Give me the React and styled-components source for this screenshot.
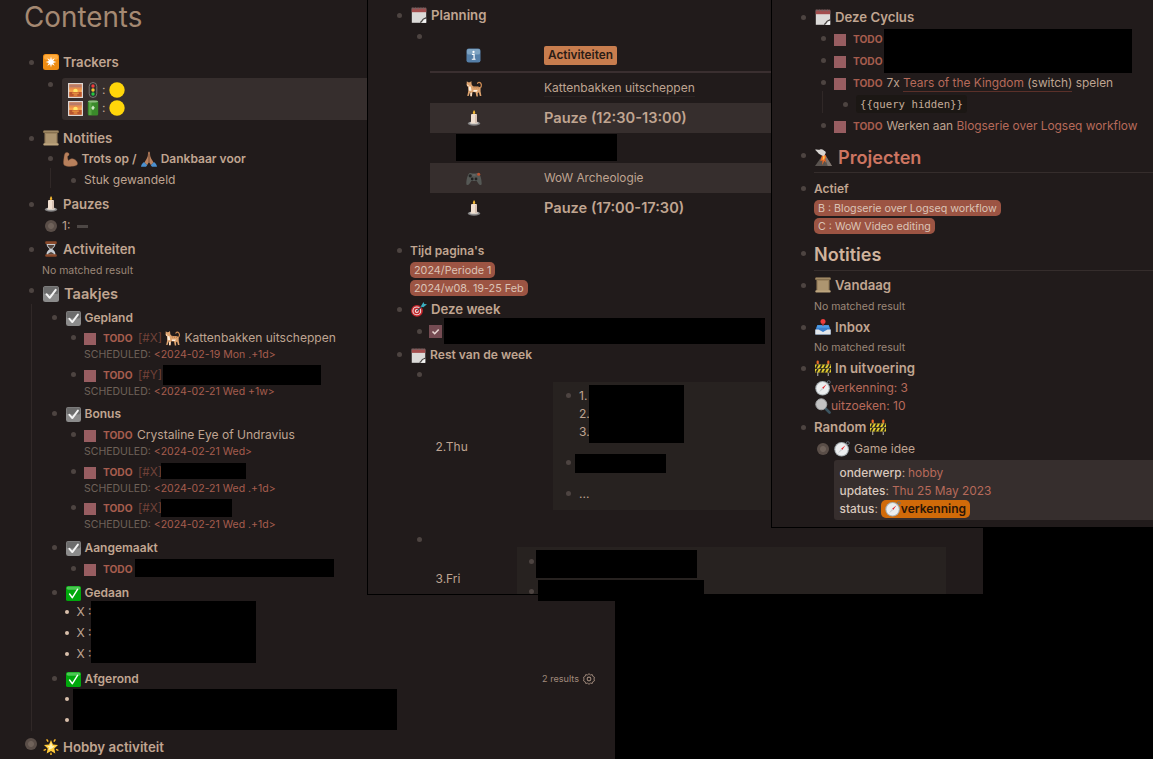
import React from 'react';
import styled, { createGlobalStyle, css } from 'styled-components';

const c = {
  panel: '#211b1b',
  block: '#362e2d',
  card: '#272220',
  text: '#bfa491',
  heading: '#c0a591',
  dim: '#6f6259',
  accent: '#a65d4e',
  link: '#b66a5a',
  bullet: '#4d4441',
  line: '#302827',
};

const GlobalStyle = createGlobalStyle`
  * { box-sizing: border-box; }
  html, body { margin: 0; background: #000; }
  body { font-family: Inter, "Liberation Sans", sans-serif; overflow: hidden; }
`;

const Desktop = styled.main`
  position: relative;
  width: 1153px;
  height: 759px;
  overflow: hidden;
  background: #000;
  color: ${c.text};
  font-size: 12px;
  line-height: 16px;
  white-space: nowrap;
`;

const Panel = styled.section`
  position: absolute;
  top: 0;
  left: ${p => p.$left}px;
  width: ${p => p.$w}px;
  height: ${p => p.$h}px;
  background: ${c.panel};
  ${p => p.$framed && css`border: solid #000; border-width: 0 0 1px 1px;`}
`;

const Row = styled.div`
  position: relative;
  display: flex;
  align-items: center;
  height: ${p => p.$h || 16}px;
  margin-top: ${p => p.$gap || 0}px;
  padding-left: ${p => p.$x || 0}px;
`;

const Slot = styled.span`
  flex: 0 0 ${p => p.$w}px;
  display: flex;
  padding-bottom: ${p => p.$up || 0}px;
`;
const Dot = styled.i`
  width: 5px;
  height: 5px;
  border-radius: 50%;
  background: ${c.bullet};
`;
const Bullet = ({ w = 14, up = 0 }) => <Slot $w={w} $up={up}><Dot /></Slot>;

const Collapsed = styled.span`
  flex: 0 0 12px;
  height: 12px;
  margin-right: ${p => p.$mr}px;
  margin-bottom: ${p => p.$up || 0}px;
  border-radius: 50%;
  background: radial-gradient(circle, #6f625a 0 2.5px, #5a4e48 3.4px);
`;

const ListDot = styled.i`
  flex: 0 0 4px;
  height: 4px;
  margin-right: ${p => p.$mr || 0}px;
  border-radius: 50%;
  background: #d8bfab;
`;

const Dash = styled.i`
  width: 11px;
  height: 3px;
  margin-left: 7px;
  background: #4d4745;
`;

const Title = styled.h1`
  margin: 0;
  height: 35px;
  padding-left: 24px;
  font-size: 27.8px;
  font-weight: 400;
  line-height: 35px;
  color: #a58972;
`;

const H = styled.span`
  font-size: ${p => p.$s || 13.2}px;
  font-weight: 600;
  color: ${p => p.$color || c.heading};
  margin-left: ${p => p.$ml || 0}px;
`;

const Text = styled.span`
  font-size: ${p => p.$s || 12.05}px;
  font-weight: ${p => p.$wt || 400};
  color: ${p => p.$color || c.text};
  margin-left: ${p => p.$ml || 0}px;
`;

const Small = styled(Text)`
  font-size: 10.5px;
  color: ${p => p.$color || '#9d8879'};
`;

const Branch = styled.div`
  display: flow-root;
  margin-left: ${p => p.$x}px;
  border-left: 1px solid ${c.line};
  height: ${p => p.$h}px;
  margin-top: ${p => p.$gap || 0}px;
`;

const Box = styled.i`
  flex: 0 0 12px;
  height: 12px;
  margin-top: 2px;
  background: #985d61;
`;

const TodoMark = styled.b`
  flex: 0 0 29px;
  min-width: 0;
  margin-left: 7px;
  font-size: 10.2px;
  font-weight: 700;
  color: ${c.accent};
`;

const Priority = styled.span`
  flex: 0 0 23px;
  min-width: 0;
  margin-left: 6px;
  font-size: 11.8px;
  color: #6f4138;
`;

const Redacted = styled.span`
  position: absolute;
  z-index: 1;
  left: ${p => p.$x}px;
  top: ${p => p.$y}px;
  width: ${p => p.$w}px;
  height: ${p => p.$h}px;
  background: #000;
`;

const Props = styled.div`
  margin: ${p => p.$m};
  width: ${p => p.$w}px;
  padding: ${p => p.$pad || '3px 6px'};
  border-radius: 3px 0 0 3px;
  background: ${c.block};
`;
const PropLine = styled.div`
  display: flex;
  align-items: center;
  height: 18px;
`;

const Results = styled.span`
  display: flex;
  align-items: center;
  gap: 4px;
  margin-left: auto;
  padding-right: 20px;
  font-size: 9.1px;
  color: #a08a7b;
`;

const Tag = styled.span`
  display: flex;
  align-items: center;
  height: 19px;
  padding: 0 4px;
  border-radius: 2px;
  background: #c87d4e;
  color: #2a1c16;
  font-weight: 600;
  font-size: 11.8px;
`;

const Pill = styled.span`
  display: flex;
  align-items: center;
  height: 16px;
  padding: 1px 4px 0;
  border-radius: 5px;
  background: #9c5443;
  color: #dbc3b6;
  font-size: ${p => p.$s || 10.8}px;
`;

const TableRow = styled.div`
  display: grid;
  grid-template-columns: 90px 1fr;
  align-items: center;
  margin-left: 62px;
  width: 516px;
  height: 30px;
  background: ${p => (p.$striped ? c.block : 'none')};
  ${p => p.$head && css`
    height: 29px;
    padding-bottom: 5px;
    border-bottom: 2px solid #3a2f30;
  `}
`;
const Cell = styled.div`
  display: flex;
  padding-left: ${p => (p.$icon ? 36 : 24)}px;
`;

const DayCard = styled.div`
  display: flow-root;
  margin-left: ${p => p.$x}px;
  width: ${p => p.$w}px;
  height: ${p => p.$h}px;
  background: ${c.card};
`;
const Day = styled.div`
  position: relative;
`;
const DayName = styled.span`
  position: absolute;
  left: 67.500px;
  top: ${p => p.$y}px;
`;

const Rule = styled.hr`
  margin: ${p => p.$gap}px 0 0 42px;
  height: 1px;
  border: 0;
  background: #352d2c;
`;

const Code = styled.code`
  display: flex;
  align-items: center;
  height: 18px;
  padding: 0 4px;
  border-radius: 3px;
  background: #1b1714;
  color: #c3ab98;
  font: 10.7px "DejaVu Sans Mono", monospace;
`;

const Underlined = styled.span`
  padding-bottom: 1px;
  border-bottom: 1px solid #5a3029;
`;
const CellLink = styled.span`
  padding-top: 1px;
  border-bottom: 1px solid #2b2423;
`;
const Status = styled.span`
  display: flex;
  align-items: center;
  height: 18px;
  margin-left: 3px;
  padding: 0 4px;
  border-radius: 5px;
  background: #d06a09;
  color: #2b1507;
  font-weight: 600;
`;
const Key = styled.span`
  color: #d9c8bd;
  font-size: 11.9px;
  font-weight: 500;
`;

const Svg = styled.svg`
  flex: none;
  display: block;
  width: ${p => p.$s}px;
  height: ${p => p.$s}px;
  margin-left: ${p => p.$ml || 0}px;
`;

const glyphs = {
  spark: (
    <>
      <rect width="16" height="16" rx="2.500" fill="#ee8c12" />
      <rect x="1" y=".8" width="14" height="5" rx="2" fill="#ffab3d" />
      <path d="M8 2.600l.9 3.100 2.800-1.500-1.500 2.900 3.200.9-3.200.9 1.500 2.900-2.800-1.500L8 13.400l-.9-3.100-2.800 1.500 1.500-2.900L2.600 8l3.200-.9-1.500-2.900 2.800 1.500z" fill="#fff" />
    </>
  ),
  sunrise: (
    <>
      <rect width="16" height="16" fill="#dcd6d4" />
      <rect x="1.400" y="1.400" width="13.200" height="13.200" fill="#f5a04a" />
      <rect x="1.400" y="1.400" width="13.200" height="3.600" fill="#b97a68" />
      <rect x="1.400" y="5" width="13.200" height="2" fill="#e88d4c" />
      <circle cx="8" cy="8.500" r="2.400" fill="#ffe66a" />
      <rect x="1.400" y="9.600" width="13.200" height="5" fill="#b8552f" />
      <path d="M4.500 10.800h7M6 12.800h4" stroke="#ffb04a" />
    </>
  ),
  traffic: (
    <>
      <rect x="4.200" y=".5" width="7.600" height="15" rx="3.800" fill="#2c2f2f" stroke="#8a8682" strokeWidth=".8" />
      <circle cx="8" cy="4" r="1.700" fill="#ef3b3b" />
      <circle cx="8" cy="8" r="1.700" fill="#f4c430" />
      <circle cx="8" cy="12" r="1.700" fill="#25c63f" />
    </>
  ),
  battery: (
    <>
      <rect x="2.800" y=".5" width="10.400" height="15" rx="1.500" fill="#3a8a2a" />
      <rect x="4" y="1.500" width="2.500" height="13.500" fill="#56a542" />
      <ellipse cx="8" cy="1.500" rx="5" ry="1.100" fill="#8fbb80" />
      <path d="M8 5.500l1.800 2.300L8 10.300 6.200 8z" fill="#cfe9c5" />
    </>
  ),
  yellow: <circle cx="8" cy="8" r="7.700" fill="#ffd60a" />,
  scroll: (
    <>
      <path d="M1.500 2h13v12h-13z" fill="#9c8460" />
      <path d="M3 4h10v9H3z" fill="#ad9570" />
      <rect x="0" y=".5" width="16" height="2.600" rx="1" fill="#86704f" />
      <rect x=".3" y="13.200" width="15.400" height="2.300" rx="1" fill="#bda57e" />
      <path d="M1 1.200h14" stroke="#bda57e" strokeWidth=".7" />
    </>
  ),
  muscle: (
    <path d="M2.800.8C4.300.2 6.300.9 6.500 2c.2 1.300-.8 2-1.600 2.500-.2 1.700.2 3.300 1 4.700 1.300-1.700 3.300-2.400 5.300-1.800 2.600.8 4.300 3 4.300 5.200 0 1.800-2.500 2.500-5.500 2.700-3.500.2-7 0-8.700-1.300C.1 12.800.5 9.800 1 6.500 1.300 4.300 1.500 1.800 2.800.8z" fill="#b8805c" stroke="#8d5c40" strokeWidth=".4" />
  ),
  pray: (
    <>
      <path d="M8 .6c1 .5 1 2.300 1.200 4.100.2 1.600 1 2.600 1.900 4.300l1.500 2.500-2.600 2.800L8 11l-2 3.300-2.600-2.800L4.900 9c.9-1.700 1.700-2.700 1.900-4.300C7 2.900 7 1.100 8 .6z" fill="#b98260" />
      <path d="M8 2.500V11" stroke="#70452f" strokeWidth=".9" />
      <path d="M3 11l3.200 3.200L5 15.800H0c.2-2 1.500-3.600 3-4.800zM13 11l-3.200 3.200L11 15.800h5c-.2-2-1.500-3.600-3-4.800z" fill="#4a90cf" />
    </>
  ),
  candle: (
    <>
      <ellipse cx="8" cy="13.500" rx="6.300" ry="2.200" fill="#807f80" />
      <ellipse cx="8" cy="13" rx="4.600" ry="1.300" fill="#c3c0bd" />
      <rect x="5" y="4" width="6" height="9.500" rx="1" fill="#f0dfd0" />
      <rect x="9" y="5" width="2" height="8" fill="#d8c2b4" />
      <path d="M8 0c1.200 1.700 1.300 2.300 1.200 3.200C9.100 4.300 6.900 4.300 6.800 3.200 6.800 2.400 7.300 1.500 8 0z" fill="#f2b632" />
    </>
  ),
  hourglass: (
    <>
      <path d="M3.500 2h9c0 3.500-1.500 4.500-3.300 6 1.800 1.500 3.300 2.500 3.300 6h-9c0-3.500 1.500-4.500 3.300-6C5 6.500 3.500 5.500 3.500 2z" fill="#c7ccd2" />
      <path d="M4.500 4h7C10.500 6.500 9 7 8 8 7 7 5.500 6.500 4.500 4zM4.800 13.500c.7-1.500 1.700-2 3.200-2.500 1.500.5 2.500 1 3.200 2.500z" fill="#54453d" />
      <rect x="2.200" y=".3" width="11.600" height="2.600" rx="1" fill="#8a4a2b" />
      <rect x="2.200" y="13.200" width="11.600" height="2.600" rx="1" fill="#8a4a2b" />
    </>
  ),
  checkGrey: (
    <>
      <rect width="16" height="16" rx="2.500" fill="#8b8b8b" />
      <rect x=".6" y=".6" width="14.800" height="7.500" rx="2.200" fill="#6c6c6c" />
      <path d="M3.500 8.200l3.200 3.600 6-8" fill="none" stroke="#f4f4f4" strokeWidth="2" strokeLinecap="round" strokeLinejoin="round" />
    </>
  ),
  checkGreen: (
    <>
      <rect width="16" height="16" rx="2" fill="#00a80c" />
      <rect x=".6" y=".5" width="14.800" height="3.500" rx="1.800" fill="#4bc753" />
      <path d="M3.800 8.500l3 4L12.300 3.500" fill="none" stroke="#fff" strokeWidth="1.500" strokeLinecap="round" strokeLinejoin="round" />
    </>
  ),
  cat: (
    <>
      <path d="M12.500 8c2-1 2.700-3.500 1.200-5.200-.8-.9-2.400-.8-2.800.3" fill="none" stroke="#c98952" strokeWidth="1.200" strokeLinecap="round" />
      <path d="M.8 1.200l1.200 1L3.800 2 5 1l.3 3.200 1.200 1.600c2 .5 4-.1 6.200.7 1.200.8 1.100 2.500 1 4l.8 4.500h-1.500L12 11.500l-1 1 .2 3H9.800L9 11.500l-2.800-.3-.7 4.300H4.200L4 11 2.500 15H1.200l1-5L2 6.500.5 4.800z" fill="#dda36f" />
      <path d="M2.500 6l2 .2.700 3.800-2.500.2zM1 4l1.800 1.500L1.500 6zM7 9.500h4l-1 1.500H7zM4.200 12h1.200v3H4.200z" fill="#fff0df" />
      <path d="M7 5.800l.8 2M9 6l.7 2M11 6l.6 2" stroke="#a96838" strokeWidth=".6" />
    </>
  ),
  star: (
    <>
      <path d="M8 1l2 4.600 5 .5-3.700 3.400 1 5L8 12l-4.300 2.500 1-5L1 6.100l5-.5z" fill="#ffcb3a" />
      <path d="M8 3.200l1.200 3.500 2.500.4-2 2-1.700 1-2.500.8.800-2.400L4 7.100l2.800-.4z" fill="#fff3b5" />
      <path d="M4 .8l.8 1.400M12 .8l-.8 1.400M1.200 11.200l1.200-.6M14.800 11.200l-1.200-.6M8 14.200v1.400" stroke="#f6b526" strokeWidth="1.500" strokeLinecap="round" />
    </>
  ),
  notepad: (
    <>
      <path d="M.8 1.500h14.400V15.800H.8z" fill="#dcdad8" />
      <rect x=".8" y=".8" width="14.400" height="4.400" fill="#a34d4d" />
      <path d="M.8 1.300h14.400" stroke="#6c6666" strokeWidth="1.800" strokeDasharray="1 .6" />
      <path d="M15.200 11.500L10.500 15.800h4.700z" fill="#f6f6f6" />
      <path d="M15.200 10.800c-1.500 1-3 .8-3.500 2-.4 1-1.200 2-2.500 2.600" fill="none" stroke="#423e3c" strokeWidth="1.100" />
    </>
  ),
  info: (
    <>
      <rect x=".5" y=".5" width="15" height="15" rx="2.500" fill="#557fa8" />
      <rect x="1" y="1" width="14" height="6" rx="2" fill="#7ea3c2" />
      <circle cx="8" cy="4.200" r="1.200" fill="#fff" />
      <path d="M6.300 6.900h2.300v4.600M6.200 12h4" stroke="#fff" strokeWidth="1.300" fill="none" />
    </>
  ),
  gamepad: (
    <>
      <path d="M3 3.500c1.500-1 2.500-.4 3.500 0h3c1-.4 2-1 3.500 0 1.500 1.500 2.700 6.500 2.700 10 0 2-2 2-3.200.3L10.700 11H5.300l-1.800 2.800C2.300 15.500.3 15.500.3 13.500.3 10 1.500 5 3 3.500z" fill="#555855" />
      <circle cx="4.200" cy="5.800" r="1.600" fill="#252726" />
      <circle cx="6.200" cy="9" r="1.400" fill="#222" />
      <circle cx="10" cy="9" r="1.400" fill="#222" />
      <circle cx="12.700" cy="4.300" r="1.500" fill="#bf512f" />
      <path d="M6.500 5h3" stroke="#777" strokeWidth=".8" />
    </>
  ),
  target: (
    <>
      <circle cx="6" cy="9.800" r="5.900" fill="#c7262c" />
      <circle cx="5.800" cy="9.900" r="4.400" fill="#ece6e4" />
      <circle cx="5.800" cy="9.900" r="3.400" fill="#c7262c" />
      <circle cx="5.800" cy="9.900" r="2" fill="#ece6e4" />
      <circle cx="5.800" cy="9.900" r=".9" fill="#c7262c" />
      <path d="M6 9.800L12 4.500" stroke="#24505d" strokeWidth="1.100" />
      <path d="M9.800 5.500L12.500 1l.8 2 2.700.2-3.700 3z" fill="#3bb0c2" />
    </>
  ),
  volcano: (
    <>
      <path d="M0 16L7 6h3l6 10z" fill="#59534f" />
      <path d="M8.500 6H10l6 10h-4z" fill="#817770" />
      <path d="M6.300 7C8 4 10 4.500 10.500 8l-1 1 1 4-1.700-2-2 4 .3-4.500L5 11.500z" fill="#ef6a25" />
      <path d="M7.600 6.500l1.800.5-.7 2.500-1.500 1z" fill="#ffc14a" />
      <path d="M0 .8C2 0 3.300 1 4.300.7 6.500-.2 8 .8 8.500 1.700c1.700.3 2 2 1.200 2.800L8.500 6.500l-2-.3C5.500 5 4 5 3.300 4.200 2.500 3 1.500 2.200 0 .8z" fill="#d8d5d2" />
    </>
  ),
  outbox: (
    <>
      <path d="M2.300 6h11.400l1.800 5v4.500H.5V11z" fill="#3b7fcc" />
      <path d="M.3 10.500h3.200L8 13l4.500-2.500h3.200v5.100H.3z" fill="#e4e7ea" />
      <path d="M2.500 6.200h11l1 2.500h-13z" fill="#4d9be4" />
      <circle cx="8" cy="2.600" r="2.500" fill="#ee3e3c" />
      <path d="M7 4.500h2L8.500 7h-1z" fill="#b8393e" />
    </>
  ),
  barrier: (
    <>
      <path d="M2.700 3v13M13.300 3v13" stroke="#97928e" strokeWidth="1.300" />
      <rect x="0" y="4.500" width="16" height="3.700" fill="#e6cf2f" />
      <rect x="0" y="9" width="16" height="3.500" fill="#e6cf2f" />
      <path d="M1 8.200l2-3.700M5 8.200l2-3.700M9 8.200l2-3.700M13 8.200l2-3.700M1 12.500L3 9M5 12.500L7 9M9 12.500l2-3.500M13 12.500L15 9" stroke="#2b281f" strokeWidth="1.600" />
      <path d="M1.600 3.800V1.500a1.100 1.100 0 012.200 0v2.300zM12.200 3.800V1.500a1.100 1.100 0 012.200 0v2.300z" fill="#ee6a24" />
    </>
  ),
  compass: (
    <>
      <circle cx="13.800" cy="2.200" r="1.500" fill="none" stroke="#66707a" strokeWidth=".9" />
      <circle cx="7.600" cy="8.300" r="7.300" fill="#a9b0b4" />
      <circle cx="7.600" cy="8.300" r="6.200" fill="#eceeef" />
      <path d="M11.500 4.200L8.200 8.900 7.100 7.800z" fill="#e5242c" />
      <path d="M3.800 12.400l3.300-4.600 1.100 1.100z" fill="#c8ccd1" />
    </>
  ),
  magnifier: (
    <>
      <path d="M10.500 10.500l4 4" stroke="#3c5561" strokeWidth="2.600" strokeLinecap="round" />
      <circle cx="6.300" cy="6.300" r="5.500" fill="#c3c3c3" stroke="#a2a4a5" strokeWidth="1" />
    </>
  ),
  gear: (
    <g fill="none" stroke="#a08a7b">
      <path d="M8 .9l1.900 1.700 2.500-.4.8 2.400 2.200 1.200-.8 2.200.8 2.300-2.200 1.200-.8 2.400-2.500-.4L8 15.100l-1.900-1.600-2.500.4-.8-2.400L.6 10.300 1.400 8 .6 5.800l2.200-1.200.8-2.400 2.500.4z" strokeWidth="1.300" strokeLinejoin="round" />
      <circle cx="8" cy="8" r="2.500" strokeWidth="1.400" />
    </g>
  ),
};

const Icon = ({ name, s = 16, ml }) => (
  <Svg $s={s} $ml={ml} viewBox="0 0 16 16" aria-hidden="true">{glyphs[name]}</Svg>
);

const Checked = () => (
  <Svg $s={13} viewBox="0 0 13 13">
    <rect width="13" height="13" fill="#754b52" />
    <path d="M3.500 6.500l2.200 2.200 4-4.200" fill="none" stroke="#e8d6d2" strokeWidth="1.600" />
  </Svg>
);

const Section = ({ x = 29, w = 14, up, gap, icon, s, is, ml = 4, children, after }) => (
  <Row $x={x} $gap={gap}>
    <Bullet w={w} up={up} />
    {icon && <Icon name={icon} s={is} />}
    <H $s={s} $ml={icon ? ml : 0}>{children}</H>
    {after}
  </Row>
);

const SubSection = props => <Section x={19.5} is={15} s={12} up={2} {...props} />;

const Todo = ({ x = 39, gap, pri, children }) => (
  <Row $x={x} $gap={gap}>
    <Bullet w={13} up={1} />
    <Box />
    <TodoMark>TODO</TodoMark>
    {pri && <Priority>[#{pri}]</Priority>}
    {children}
  </Row>
);

const Scheduled = ({ date }) => (
  <Row $x={52} $gap={1}>
    <Small $color={c.dim}>SCHEDULED:</Small>
    <Small $color={c.accent} $ml={3}>&lt;{date}&gt;</Small>
  </Row>
);

const Contents = () => (
  <Panel $left={0} $w={615} $h={759}>
    <Title>Contents</Title>
    <Section gap={19} icon="spark">Trackers</Section>
    <Row $x={48} $h={42} $gap={8}>
      <Bullet w={14} up={29} />
      <Props $m="0" $w={553}>
        <PropLine><Icon name="sunrise" s={15} /><Icon name="traffic" ml={2} /><Text $ml={1}>:</Text><Icon name="yellow" ml={4} /></PropLine>
        <PropLine><Icon name="sunrise" s={15} /><Icon name="battery" ml={2} /><Text $ml={1}>:</Text><Icon name="yellow" ml={4} /></PropLine>
      </Props>
    </Row>
    <Section gap={10} icon="scroll">Notities</Section>
    <Row $x={48} $gap={5}>
      <Bullet w={15} up={1} />
      <Icon name="muscle" s={15} />
      <H $s={12} $ml={3.5}>Trots op /</H>
      <Icon name="pray" ml={4} />
      <H $s={12} $ml={4}>Dankbaar voor</H>
    </Row>
    <Branch $x={50} $h={20} $gap={1}>
      <Row $x={20} $gap={4}><Bullet w={13} /><Text>Stuk gewandeld</Text></Row>
    </Branch>
    <Section gap={8} icon="candle">Pauzes</Section>
    <Row $x={45} $gap={6}>
      <Collapsed $mr={5} /><Text>1:</Text><Dash />
    </Row>
    <Section gap={7} icon="hourglass">Activiteiten</Section>
    <Row $x={42} $gap={6}><Small>No matched result</Small></Row>
    <Section gap={7} icon="checkGrey" s={14.6} up={7} ml={5}>Taakjes</Section>
    <Branch $x={31} $h={427} $gap={2}>
      <SubSection gap={6} icon="checkGrey">Gepland</SubSection>
      <Todo gap={4} pri="X"><Icon name="cat" ml={4} /><Text $ml={3.5}>Kattenbakken uitscheppen</Text></Todo>
      <Scheduled date="2024-02-19 Mon .+1d" />
      <Todo gap={4} pri="Y"><Redacted $x={131} $y={-2} $w={158} $h={20} /></Todo>
      <Scheduled date="2024-02-21 Wed +1w" />
      <SubSection gap={6} icon="checkGrey">Bonus</SubSection>
      <Todo gap={5}><Text $ml={5}>Crystaline Eye of Undravius</Text></Todo>
      <Scheduled date="2024-02-21 Wed" />
      <Todo gap={4} pri="X"><Redacted $x={129} $y={-1} $w={85} $h={16} /></Todo>
      <Scheduled date="2024-02-21 Wed .+1d" />
      <Todo gap={3} pri="X"><Redacted $x={129} $y={-1} $w={71} $h={18} /></Todo>
      <Scheduled date="2024-02-21 Wed .+1d" />
      <SubSection gap={7} icon="checkGrey">Aangemaakt</SubSection>
      <Todo gap={5}><Redacted $x={103} $y={-2} $w={199} $h={18} /></Todo>
      <SubSection gap={8} icon="checkGreen">Gedaan</SubSection>
      <Row $x={32.5} $gap={3}><ListDot $mr={8} /><Text>X :</Text><Redacted $x={59} $y={-3} $w={165} $h={62} /></Row>
      <Row $x={32.5} $gap={5}><ListDot $mr={8} /><Text>X :</Text></Row>
      <Row $x={32.5} $gap={5}><ListDot $mr={8} /><Text>X :</Text></Row>
      <SubSection gap={9} icon="checkGreen" after={<Results>2 results<Icon name="gear" s={12} /></Results>}>
        Afgerond
      </SubSection>
      <Row $x={32.5} $gap={4}><ListDot /><Redacted $x={41} $y={-2} $w={324} $h={41} /></Row>
      <Row $x={32.5} $gap={5}><ListDot /></Row>
    </Branch>
    <Row $x={25} $gap={8}>
      <Collapsed $mr={6} $up={6} />
      <Icon name="star" />
      <H $ml={4} $s={13.3}>Hobby activiteit</H>
    </Row>
  </Panel>
);

const Planning = () => (
  <Panel $left={367} $w={616} $h={595} $framed>
    <Section gap={7} icon="notepad">Planning</Section>
    <Row $x={49} $gap={5}><Bullet /></Row>
    <TableRow $head>
      <Cell $icon><Icon name="info" s={15} /></Cell>
      <Cell><Tag>Activiteiten</Tag></Cell>
    </TableRow>
    <TableRow>
      <Cell $icon><Icon name="cat" s={17} /></Cell>
      <Cell><CellLink>Kattenbakken uitscheppen</CellLink></Cell>
    </TableRow>
    <TableRow $striped>
      <Cell $icon><Icon name="candle" /></Cell>
      <Cell><H $s={14.6}>Pauze (12:30-13:00)</H></Cell>
    </TableRow>
    <Row $h={30}><Redacted $x={88} $y={1} $w={161} $h={27} /></Row>
    <TableRow $striped>
      <Cell $icon><Icon name="gamepad" /></Cell>
      <Cell><Text $s={11.8}>WoW Archeologie</Text></Cell>
    </TableRow>
    <TableRow>
      <Cell $icon><Icon name="candle" /></Cell>
      <Cell><H $s={14.6}>Pauze (17:00-17:30)</H></Cell>
    </TableRow>
    <Section w={13} gap={20} s={12} up={2}>Tijd pagina's</Section>
    <Row $x={42} $gap={3}><Pill>2024/Periode 1</Pill></Row>
    <Row $x={42} $gap={2}><Pill>2024/w08. 19-25 Feb</Pill></Row>
    <Section gap={5} icon="target">Deze week</Section>
    <Row $x={49} $gap={6}>
      <Bullet w={12} /><Checked />
      <Redacted $x={76} $y={-5} $w={321} $h={26} />
    </Row>
    <Section gap={8} icon="notepad" is={15} s={12.1} up={2}>Rest van de week</Section>
    <Row $x={49} $gap={3}><Bullet /></Row>
    <Day>
      <DayName $y={57}>2.Thu</DayName>
      <DayCard $x={185} $w={393} $h={128}>
        <Row $x={13} $gap={6}><Bullet w={13} up={1} /><Text>1.</Text><Redacted $x={36} $y={-3} $w={95} $h={58} /></Row>
        <Row $x={26} $gap={2}><Text>2.</Text></Row>
        <Row $x={26} $gap={2}><Text>3.</Text></Row>
        <Row $x={13} $gap={15}><Bullet w={13} up={2} /><Redacted $x={22} $y={-1} $w={91} $h={19} /></Row>
        <Row $x={13} $gap={15}><Bullet w={13} up={2} /><Text>...</Text></Row>
      </DayCard>
    </Day>
    <Row $x={49} $gap={21}><Bullet /></Row>
    <Day>
      <DayName $y={24}>3.Fri</DayName>
      <DayCard $x={149} $w={429} $h={47}>
        <Row $x={12} $gap={6}><Bullet w={13} /><Redacted $x={19} $y={-3} $w={161} $h={28} /></Row>
        <Row $x={12} $gap={14}><Bullet w={13} /><Redacted $x={21} $y={-3} $w={166} $h={21} /></Row>
      </DayCard>
    </Day>
  </Panel>
);

const Cycle = () => (
  <Panel $left={771} $w={382} $h={528} $framed>
    <Section gap={9} icon="notepad">Deze Cyclus</Section>
    <Todo x={49} gap={6}><Redacted $x={112} $y={-2} $w={248} $h={44} /></Todo>
    <Todo x={49} gap={6} />
    <Todo x={49} gap={6}>
      <Text $s={11.9} $ml={4.5}>7x <Underlined><Text $s={11.9} $color={c.link}>Tears of the Kingdom</Text> (switch)</Underlined> spelen</Text>
    </Todo>
    <Branch $x={50} $h={22}>
      <Row $x={20} $gap={5}><Bullet w={13} /><Code>{'{{query hidden}}'}</Code></Row>
    </Branch>
    <Todo x={49} gap={5}>
      <Text $s={11.9} $ml={4.5}>Werken aan <Text $s={11.9} $color={c.link}>Blogserie over Logseq workflow</Text></Text>
    </Todo>
    <Row $x={29} $h={18} $gap={14}>
      <Bullet up={4} /><Icon name="volcano" s={17} /><H $s={18.1} $ml={6} $color="#cd7561">Projecten</H>
    </Row>
    <Rule $gap={6} />
    <Section w={13} gap={8} s={12} up={2}>Actief</Section>
    <Row $x={42} $gap={3}><Pill $s={10.7}>B : Blogserie over Logseq workflow</Pill></Row>
    <Row $x={42} $gap={2}><Pill $s={10.7}>C : WoW Video editing</Pill></Row>
    <Row $x={29} $h={18} $gap={12}><Bullet w={13} up={4} /><H $s={18} $color="#d0b39d">Notities</H></Row>
    <Rule $gap={6} />
    <Section gap={6} icon="scroll">Vandaag</Section>
    <Row $x={42} $gap={6}><Small>No matched result</Small></Row>
    <Section gap={4} icon="outbox">Inbox</Section>
    <Row $x={42} $gap={5}><Small>No matched result</Small></Row>
    <Section gap={4} icon="barrier">In uitvoering</Section>
    <Row $x={43} $gap={4}><Icon name="compass" /><Text $s={11.95} $color={c.link}>verkenning: 3</Text></Row>
    <Row $x={43} $gap={2}><Icon name="magnifier" /><Text $color={c.link}>uitzoeken: 10</Text></Row>
    <Section w={13} gap={5} after={<Icon name="barrier" ml={4} />}>Random</Section>
    <Row $x={45} $gap={6}>
      <Collapsed $mr={5} /><Icon name="compass" /><Text $ml={4}>Game idee</Text>
    </Row>
    <Props $m="3px 0 0 62px" $pad="4px 5.5px 2px" $w={319}>
      <PropLine><Key>onderwerp</Key>:<Text $ml={3} $s={11.9} $color={c.link}>hobby</Text></PropLine>
      <PropLine><Key>updates</Key>:<Text $ml={3} $s={11.9} $color={c.link}>Thu 25 May 2023</Text></PropLine>
      <PropLine><Key>status</Key>:<Status><Icon name="compass" />verkenning</Status></PropLine>
    </Props>
  </Panel>
);

export default function App() {
  return (
    <Desktop>
      <GlobalStyle />
      <Contents />
      <Planning />
      <Cycle />
    </Desktop>
  );
}
